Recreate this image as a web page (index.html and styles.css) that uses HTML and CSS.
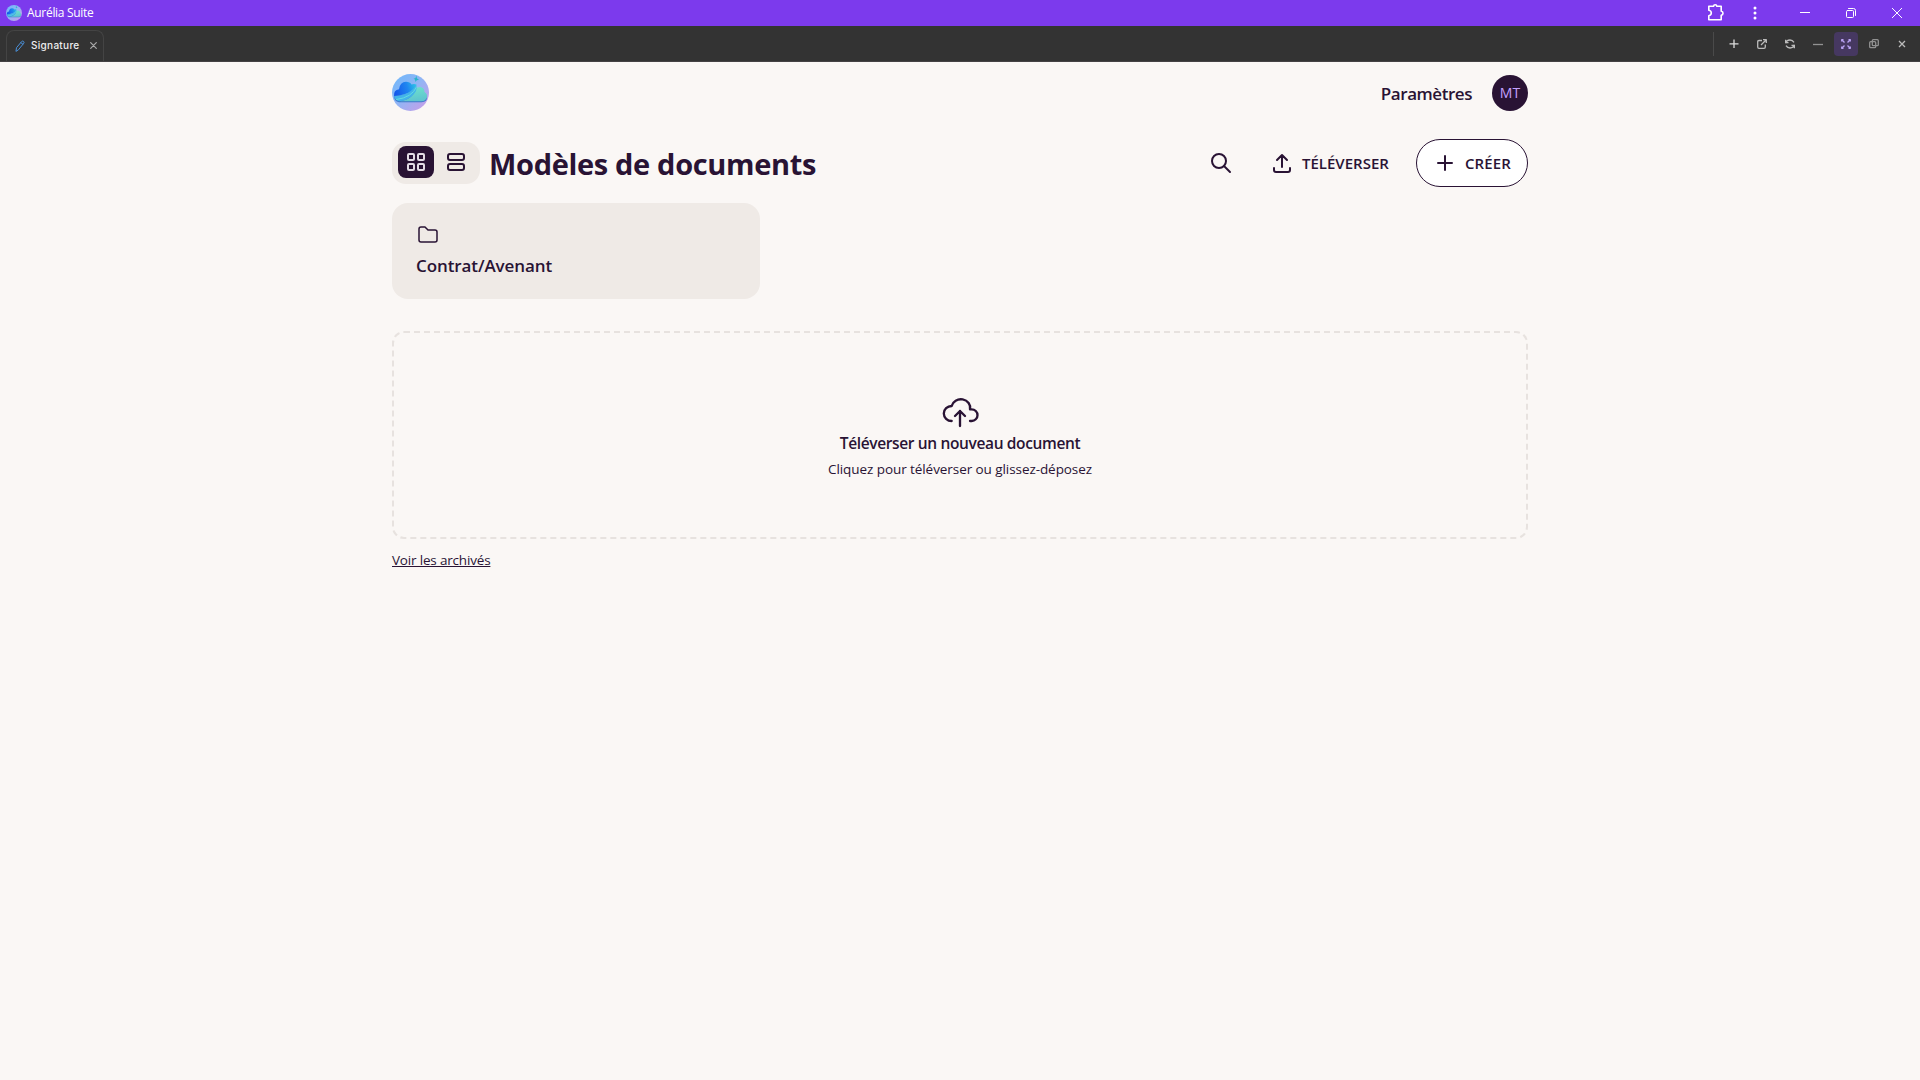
FILE: index.html
```html
<!DOCTYPE html>
<html lang="fr">

<head>
    <meta charset="UTF-8">
    <meta name="viewport" content="width=device-width, initial-scale=1.0">
    <title>Aurélia Suite</title>
    <link rel="stylesheet" href="styles.css">
</head>

<body>
    <svg class="defs" width="0" height="0">
        <defs>
            <linearGradient id="sky" x1="0" y1="0" x2="1" y2="1">
                <stop offset="0" stop-color="#6cb8fb"/>
                <stop offset="0.5" stop-color="#93b4f4"/>
                <stop offset="1" stop-color="#cf9ae6"/>
            </linearGradient>
            <linearGradient id="blue" x1="0" y1="0.5" x2="1" y2="0.3">
                <stop offset="0" stop-color="#1558ea"/>
                <stop offset="0.6" stop-color="#1f86f0"/>
                <stop offset="1" stop-color="#2cc4e6"/>
            </linearGradient>
            <linearGradient id="teal" x1="0" y1="0" x2="0.3" y2="1">
                <stop offset="0" stop-color="#6fe6cb"/>
                <stop offset="1" stop-color="#5fc6cf"/>
            </linearGradient>
        </defs>
        <symbol id="logo" viewBox="0 0 37 37">
            <circle cx="18.5" cy="18.5" r="18.5" fill="url(#sky)"/>
            <path d="M7 28.200Q2 27.500 2 22L24 18L35 22Q35.500 28.200 29.500 28.200Z" fill="#3f78cc"/>
            <path d="M8 27.200Q17 26 21.500 20Q22.500 13 28 13Q32.500 13.500 32.500 18Q35.700 19.500 35 23.500Q33.500 27.200 29.500 27.200Z" fill="url(#teal)"/>
            <path d="M2 22Q1.500 15.800 7 15.200Q8 8 14 7.800Q18 7.800 19.500 10.500Q22 9.500 24.300 10.500Q23 20 2 22Z" fill="url(#blue)"/>
            <path d="M2 22.300Q19 21 24.300 10.500Q26 17 20 22Q14.500 26.700 7 27.200Q2.700 26 2 22.300Z" fill="#43b3ea"/>
            <path d="M4.500 25.500Q20 23.500 24.500 13" fill="none" stroke="#62dce0" stroke-width="1"/>
            <path d="M24.300 1.500L25 4.500L27 5.500L24.500 6.500L23.500 8L23 5.500L21.500 4.800L23.500 4Z" fill="#2ab5c9"/>
        </symbol>
    </svg>

    <div class="titlebar">
        <svg class="app-logo"><use href="#logo"/></svg>
        <span class="app-name">Aurélia Suite</span>
        <div class="window-controls">
            <svg class="puzzle" width="18" height="18" viewBox="0 0 18 18"><path d="M1.800 2.300H6.500Q6.700 0.800 8.200 0.800Q9.700 0.800 9.900 2.300H14.200V7.300Q16 7.500 16 9.300Q16 11 14.200 11.200V15.700H1.800V11.700Q4.300 11.200 4.300 9Q4.300 6.700 1.800 6.300Z"/></svg>
            <svg class="dots" width="4" height="14" viewBox="0 0 4 14"><circle cx="2" cy="2" r="1.500"/><circle cx="2" cy="7" r="1.500"/><circle cx="2" cy="12" r="1.500"/></svg>
            <svg class="ctrl" width="10" height="10" viewBox="0 0 10 10"><path d="M0 4.500H10"/></svg>
            <svg class="ctrl" width="10" height="10" viewBox="0 0 10 10"><rect x="0.500" y="2.500" width="7" height="7" rx="1"/><path d="M2.500 0.500H7.500Q9.500 0.500 9.500 2.500V7.500"/></svg>
            <svg class="ctrl" width="10" height="10" viewBox="0 0 10 10"><path d="M0.300 0.300L9.700 9.700M9.700 0.300L0.300 9.700"/></svg>
        </div>
    </div>

    <div class="tabbar">
        <div class="tab">
            <svg class="pencil" width="10" height="12" viewBox="0 0 10 12"><path d="M1 11L1.500 7.700L6.700 1.500Q7.500 0.700 8.500 1.400Q9.500 2.200 8.800 3.200L3.700 9.500ZM5.900 2.700L7.900 4.200"/></svg>
            <span>Signature</span>
            <svg class="tab-close" width="7" height="7" viewBox="0 0 7 7"><path d="M0.700 0.700L6.300 6.300M6.300 0.700L0.700 6.300"/></svg>
        </div>
        <div class="tools">
            <div class="tool plus"><svg width="10" height="10" viewBox="0 0 10 10"><path d="M5 0.500V9M0.500 4.800H9.500"/></svg></div>
            <div class="tool"><svg width="10" height="10" viewBox="0 0 10 10"><path d="M5 1.500H2Q0.700 1.500 0.700 2.800V8Q0.700 9.300 2 9.300H7Q8.300 9.300 8.300 8V5.500M6 0.700H9.300V4M9 1L4 6"/></svg></div>
            <div class="tool"><svg width="10" height="10" viewBox="0 0 10 10"><path d="M0.700 4.300Q1.300 1 5 1Q7.500 1 9 3.300M9.300 5.700Q8.700 9 5 9Q2.500 9 1 6.700M0.600 0.800V3.700H3.500M9.400 9.200V6.300H6.500"/></svg></div>
            <div class="tool minus"><svg width="10" height="10" viewBox="0 0 10 10"><path d="M0 5.500H10"/></svg></div>
            <div class="tool active"><svg width="10" height="10" viewBox="0 0 10 10"><path d="M0.700 2.500V0.700H2.500M1 1L3.500 3.500M7.500 0.700H9.300V2.500M9 1L6.500 3.500M0.700 7.500V9.300H2.500M1 9L3.500 6.500M7.500 9.300H9.300V7.500M9 9L6.500 6.500"/></svg></div>
            <div class="tool dim"><svg width="10" height="10" viewBox="0 0 10 10"><rect x="3.300" y="0.700" width="6" height="6" rx="1"/><rect x="0.700" y="2.700" width="6" height="6" rx="1"/></svg></div>
            <div class="tool"><svg width="8" height="8" viewBox="0 0 8 8"><path d="M1 1L7 7M7 1L1 7"/></svg></div>
        </div>
    </div>

    <div class="container">
        <header class="header">
            <svg class="logo"><use href="#logo"/></svg>
            <div class="user">
                <a class="settings">Paramètres</a>
                <div class="avatar">MT</div>
            </div>
        </header>

        <div class="toolbar">
            <div class="view-switch">
                <div class="view selected">
                    <svg width="24" height="24" viewBox="0 0 24 24"><rect x="4" y="4" width="6" height="6" rx="1"/><rect x="14" y="4" width="6" height="6" rx="1"/><rect x="4" y="14" width="6" height="6" rx="1"/><rect x="14" y="14" width="6" height="6" rx="1"/></svg>
                </div>
                <div class="view">
                    <svg width="24" height="24" viewBox="0 0 24 24"><rect x="4" y="4" width="16" height="6" rx="2"/><rect x="4" y="14" width="16" height="6" rx="2"/></svg>
                </div>
            </div>
            <h1>Modèles de documents</h1>
            <div class="search">
                <svg width="24" height="24" viewBox="0 0 24 24"><circle cx="10" cy="10" r="7"/><path d="M21 21L15 15"/></svg>
            </div>
            <button class="upload">
                <svg width="24" height="24" viewBox="0 0 24 24"><path d="M4 17V19A2 2 0 0 0 6 21H18A2 2 0 0 0 20 19V17M7 9L12 4L17 9M12 4V16"/></svg>
                <span>TÉLÉVERSER</span>
            </button>
            <button class="create">
                <svg width="24" height="24" viewBox="0 0 24 24"><path d="M12 5V19M5 12H19"/></svg>
                <span>CRÉER</span>
            </button>
        </div>

        <div class="folder">
            <svg width="24" height="24" viewBox="0 0 24 24"><path d="M5 4H9L12 7H19A2 2 0 0 1 21 9V17A2 2 0 0 1 19 19H5A2 2 0 0 1 3 17V6A2 2 0 0 1 5 4"/></svg>
            <span>Contrat/Avenant</span>
        </div>

        <div class="dropzone">
            <svg width="40" height="40" viewBox="0 0 24 24"><path d="M7 18A4.600 4.400 0 0 1 7 9A5 4.500 0 0 1 18 11H19A3.500 3.500 0 0 1 19 18H18M9 15L12 12L15 15M12 12V21"/></svg>
            <div class="drop-title">Téléverser un nouveau document</div>
            <div class="drop-hint"><span>Cliquez pour téléverser</span> ou glissez-déposez</div>
        </div>

        <a class="archived">Voir les archivés</a>
    </div>
</body>

</html>
```

FILE: styles.css
```css
* {
    box-sizing: border-box;
}

body {
    margin: 0;
    min-height: 100vh;
    background-color: #faf7f5;
    color: #291334;
    font-family: "Open Sans", "Noto Sans", sans-serif;
}

svg {
    display: block;
    flex-shrink: 0;
    fill: none;
    stroke: currentColor;
    stroke-width: 2;
    stroke-linecap: round;
    stroke-linejoin: round;
}

.defs {
    position: absolute;
}

.titlebar {
    display: flex;
    align-items: center;
    height: 26px;
    padding-left: 6px;
    background-color: #7c3aed;
    color: white;
}

.app-logo {
    width: 16px;
    height: 16px;
    stroke: none;
}

.app-name {
    margin-left: 5px;
    padding-bottom: 1px;
    font-size: 12px;
    letter-spacing: -0.3px;
}

.window-controls {
    display: flex;
    align-items: center;
    margin-left: auto;
    padding-right: 18px;
}

.puzzle {
    margin-right: 28px;
    stroke-width: 1.6;
}

.dots {
    margin-right: 7px;
    fill: white;
    stroke: none;
}

.ctrl {
    margin-left: 36px;
    stroke-width: 1;
}

.tabbar {
    display: flex;
    align-items: flex-end;
    height: 36px;
    padding: 0 6px;
    background-color: #333333;
    border-bottom: 1px solid #454244;
}

.tab {
    display: flex;
    align-items: center;
    width: 98px;
    height: 31px;
    padding: 0 6px 1px 8px;
    border: 1px solid #444444;
    border-bottom: none;
    border-radius: 8px 8px 0 0;
    color: #eeeeee;
    font-family: Inter, sans-serif;
    font-size: 10px;
    font-weight: 500;
}

.tab span {
    margin-left: 6px;
    padding-bottom: 1px;
    letter-spacing: 0.3px;
}

.pencil {
    color: #4a90d9;
    stroke-width: 1;
}

.tab-close {
    margin-left: auto;
    color: #aaaaaa;
    stroke-width: 1.2;
}

.tools {
    display: flex;
    gap: 4px;
    height: 24px;
    margin: 0 0 5px auto;
    padding-left: 8px;
    border-left: 1px solid #4a4a4a;
}

.tool {
    display: flex;
    align-items: center;
    justify-content: center;
    width: 24px;
    height: 24px;
    border-radius: 4px;
    color: #bbbbbb;
}

.tool svg {
    stroke-width: 1.3;
    stroke-linecap: butt;
}

.tool.plus {
    color: #dddddd;
}

.tool.minus,
.tool.dim {
    color: #929292;
}

.tool.active {
    background-color: #463861;
    color: #b9a2f2;
}

.container {
    width: 1136px;
    margin: 0 auto;
}

.header {
    display: flex;
    align-items: center;
    justify-content: space-between;
    height: 61px;
}

.logo {
    width: 37px;
    height: 37px;
    stroke: none;
}

.user {
    display: flex;
    align-items: center;
    gap: 20px;
}

.settings {
    padding-top: 1px;
    font-size: 17px;
    font-weight: 600;
    letter-spacing: -0.45px;
}

.avatar {
    width: 36px;
    height: 36px;
    border-radius: 50%;
    background-color: #291334;
    color: #c4a1ff;
    font-size: 14px;
    line-height: 36px;
    text-align: center;
}

.toolbar {
    display: flex;
    align-items: center;
    height: 48px;
    margin-top: 16px;
}

.view-switch {
    display: flex;
    gap: 4px;
    width: 88px;
    height: 42px;
    padding: 4px 6px;
    border-radius: 14px;
    background-color: #efeae6;
}

.view {
    display: flex;
    align-items: center;
    justify-content: center;
    width: 36px;
    height: 32px;
    border-radius: 8px;
}

.view.selected {
    background-color: #291334;
    color: #e3dce4;
}

h1 {
    margin: 0 auto 0 9px;
    padding-top: 2px;
    font-size: 29px;
    line-height: 36px;
    letter-spacing: -0.33px;
    white-space: nowrap;
}

button {
    display: flex;
    align-items: center;
    gap: 8px;
    height: 48px;
    padding: 0;
    border: none;
    background: none;
    color: inherit;
    font-family: inherit;
    font-size: 15px;
    font-weight: 600;
}

.search {
    margin-right: 37px;
}

.upload {
    width: 121px;
    margin-right: 25px;
}

.create {
    width: 112px;
    padding-left: 16px;
    border: 1px solid #291334;
    border-radius: 24px;
    background-color: white;
    letter-spacing: 0.1px;
}

.folder {
    width: 368px;
    height: 96px;
    margin-top: 16px;
    padding: 20px 24px;
    border-radius: 16px;
    background-color: #efeae6;
    font-size: 17px;
    font-weight: 600;
    line-height: 28px;
    letter-spacing: -0.1px;
}

.folder svg {
    margin-bottom: 5px;
    stroke-width: 1.5;
}

.dropzone {
    display: flex;
    flex-direction: column;
    align-items: center;
    height: 208px;
    margin-top: 32px;
    padding-top: 58px;
    border: 2px dashed #e7e2df;
    border-radius: 12px;
}

.dropzone svg {
    stroke-width: 1.4;
}

.drop-title {
    font-size: 15.5px;
    font-weight: 600;
    line-height: 24px;
    letter-spacing: -0.36px;
}

.drop-hint {
    margin-top: 4px;
    font-size: 13.5px;
    line-height: 20px;
    letter-spacing: -0.07px;
}

.archived {
    display: inline-block;
    margin-top: 11px;
    font-size: 13.5px;
    line-height: 20px;
    letter-spacing: -0.18px;
    text-decoration: underline;
}
```
